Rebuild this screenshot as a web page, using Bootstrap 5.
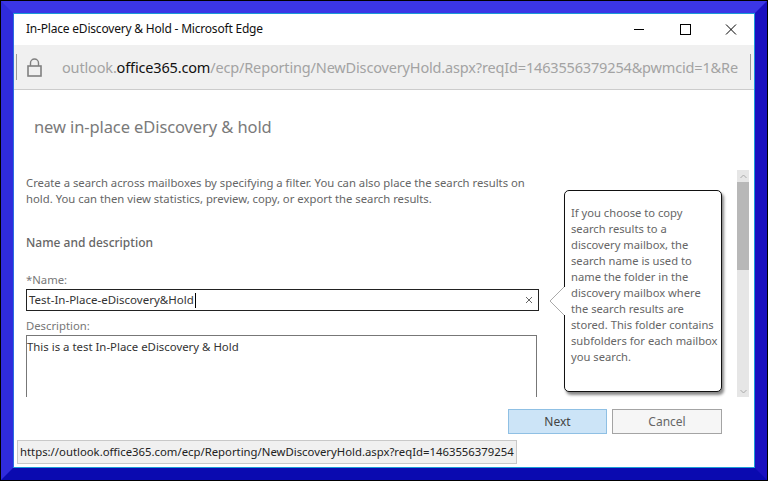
<!DOCTYPE html>
<html lang="en">
<head>
<meta charset="utf-8">
<title>In-Place eDiscovery &amp; Hold</title>
<link href="https://cdn.jsdelivr.net/npm/bootstrap@5.3.0/dist/css/bootstrap.min.css" rel="stylesheet">
<style>
html,body{margin:0;height:100%;overflow:hidden;background:#000}
body{font-family:"Noto Sans","Open Sans",sans-serif;padding:1px}
.bevel{width:766px;height:479px;border-style:solid;border-width:12px;border-color:#3b36e6 #1a10c0 #0a0ab0 #2f2bdc}
.win{height:100%;background:#fff;border:1px solid #1b9ad6;border-left-color:#2a6fe0;position:relative;overflow:hidden}
.titlebar{height:31px;padding-left:12px;font-size:12px;letter-spacing:-.2px;color:#111}
.tname{margin-bottom:2px}
.wctl{width:15px;height:15px;display:block}
.winbtns{gap:31px;padding-right:15px}
.addr{height:45px;background:#f0f0f0;border-bottom:1px solid #ccc;font-size:14.5px;letter-spacing:-.16px;color:#a3a3a3;white-space:nowrap;padding:0 3px 0 2px}
.sep{width:1px;height:26px;background:#999;flex:none}
.lock{margin:0 20px 0 10px;flex:none;display:block}
.urlclip{width:676px;overflow:hidden;padding-top:1px}
.urlhost{color:#111}
.bodyrow{height:307px}
.scrollarea{width:723px;padding:0 0 0 12px}
.dlgtitle{font-size:16.5px;letter-spacing:-.1px;color:#7a7a7a;margin:0;padding:27px 0 0 8px;height:85px;font-weight:400}
.intro{font-size:11.3px;line-height:16px;color:#666;width:510px;margin:0}
.secthead{font-size:12px;font-weight:500;color:#666;margin:27px 0 20px}
.lbl{font-size:11.3px;color:#777;line-height:16px;margin:0 0 1px;display:block}
.inbox{width:513px;height:22px;border:1px solid #222;font-size:11.5px;color:#333;padding:0 5px 0 2px;margin-bottom:7px}
.caret{width:1px;height:15px;background:#000;margin-left:1px}
.clr{margin-left:auto;display:block}
.tarea{width:511px;height:90px;border:1px solid #777;border-bottom:0;font-size:11.4px;color:#333;padding:3px 0 0 0;line-height:16px}
.sbar{width:12px;height:227px;background:#e6e6e6;margin-top:80px;flex:none}
.sarrow{height:12px}
.sthumb{height:88px;background:#b8b8b8}
.callout{position:absolute;left:550px;top:176px;width:158px;height:202px;background:#fff;border:1px solid #111;border-radius:5px;box-shadow:2px 3px 3px #888;padding:14px 3px 0 6px;font-size:11.2px;line-height:16px;color:#666}
.nub{position:absolute;left:535px;top:273px;display:block}
.actions{gap:5px;padding:12px 32px 0 0;justify-content:flex-end}
.dbtn{height:25px;font-size:12px;padding:0;border-radius:0;line-height:1}
.dbtn.go{width:99px;background:#cce4f7;border:1px solid #8fc0e4;color:#444}
.dbtn.stop{width:110px;background:#f6f6f6;border:1px solid #a4a4a4;color:#666}
.status{position:absolute;left:3px;top:426px;width:500px;height:24px;background:#f0f0f0;border:1px solid #c8c8c8;font-size:11.33px;color:#222;padding-left:2px;white-space:nowrap}
</style>
</head>
<body>
<div class="bevel">
  <div class="win">
    <div class="titlebar d-flex align-items-center justify-content-between">
      <span class="tname">In-Place eDiscovery &amp; Hold - Microsoft Edge</span>
      <div class="winbtns d-flex align-items-center">
        <svg class="wctl" viewBox="0 0 15 15"><path d="M2 7.5h10" stroke="#000" fill="none"/></svg>
        <svg class="wctl" viewBox="0 0 15 15"><rect x="2.5" y="2.5" width="10" height="10" stroke="#000" fill="none"/></svg>
        <svg class="wctl" viewBox="0 0 15 15"><path d="M2 2.5l10 10M12 2.5l-10 10" stroke="#000" fill="none"/></svg>
      </div>
    </div>
    <div class="addr d-flex align-items-center">
      <span class="sep"></span>
      <svg class="lock" width="15" height="19" viewBox="0 0 15 19"><path d="M3.5 8V5a4 4 0 0 1 8 0v3" fill="none" stroke="#808080" stroke-width="1.4"/><rect x="1" y="8" width="13" height="10" fill="none" stroke="#808080" stroke-width="1.6"/></svg>
      <div class="urlclip">outlook.<span class="urlhost">office365.com</span>/ecp/Reporting/NewDiscoveryHold.aspx?reqId=1463556379254&amp;pwmcid=1&amp;ReturnObjectType=1</div>
      <span class="sep ms-auto"></span>
    </div>
    <div class="bodyrow d-flex">
      <div class="scrollarea overflow-hidden">
        <h1 class="dlgtitle">new in-place eDiscovery &amp; hold</h1>
        <p class="intro">Create a search across mailboxes by specifying a filter. You can also place the search results on hold. You can then view statistics, preview, copy, or export the search results.</p>
        <div class="secthead">Name and description</div>
        <label class="lbl">*Name:</label>
        <div class="inbox d-flex align-items-center">
          <span>Test-In-Place-eDiscovery&amp;Hold</span><span class="caret"></span>
          <svg class="clr" width="8" height="8" viewBox="0 0 8 8"><path d="M1 1l6 6M7 1L1 7" stroke="#666" fill="none"/></svg>
        </div>
        <label class="lbl">Description:</label>
        <div class="tarea">This is a test In-Place eDiscovery &amp; Hold</div>
      </div>
      <div class="sbar d-flex flex-column">
        <div class="sarrow d-flex align-items-center justify-content-center"><svg width="7" height="5" viewBox="0 0 7 5"><path d="M.5 4l3-3 3 3" stroke="#aaa" fill="none"/></svg></div>
        <div class="sthumb"></div>
        <div class="sarrow d-flex align-items-center justify-content-center mt-auto"><svg width="7" height="5" viewBox="0 0 7 5"><path d="M.5 1l3 3 3-3" stroke="#aaa" fill="none"/></svg></div>
      </div>
    </div>
    <div class="actions d-flex">
      <button type="button" class="btn dbtn go">Next</button>
      <button type="button" class="btn dbtn stop">Cancel</button>
    </div>
    <div class="callout">If you choose to copy search results to a discovery mailbox, the search name is used to name the folder in the discovery mailbox where the search results are stored. This folder contains subfolders for each mailbox you search.</div>
    <svg class="nub" width="16" height="28" viewBox="0 0 16 28"><path d="M16 0H15L1 14 15 28H16Z" fill="#fff"/><path d="M15 0L1 14 15 28" fill="none" stroke="#aaa"/></svg>
    <div class="status d-flex align-items-center">https://outlook.office365.com/ecp/Reporting/NewDiscoveryHold.aspx?reqId=1463556379254</div>
  </div>
</div>
<script src="https://cdn.jsdelivr.net/npm/bootstrap@5.3.0/dist/js/bootstrap.bundle.min.js"></script>
</body>
</html>
